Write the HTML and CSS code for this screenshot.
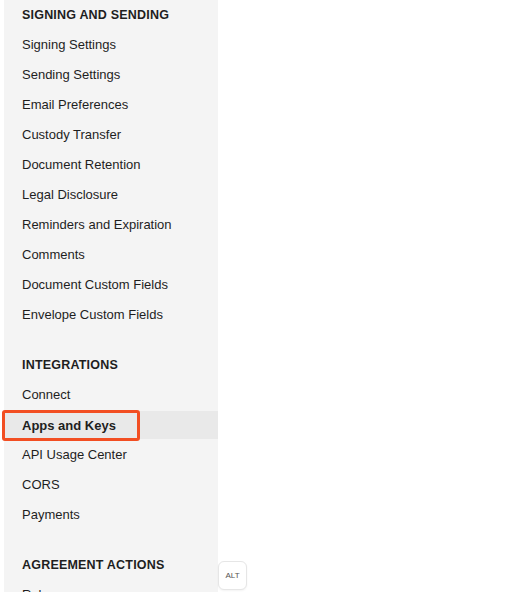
FILE: index.html
```html
<!DOCTYPE html>
<html>
<head>
<meta charset="utf-8">
<link rel="stylesheet" href="styles.css">
</head>
<body>
<nav class="sidebar">
  <section class="group">
    <h2 class="group-title">Signing and Sending</h2>
    <a class="item">Signing Settings</a>
    <a class="item">Sending Settings</a>
    <a class="item">Email Preferences</a>
    <a class="item">Custody Transfer</a>
    <a class="item">Document Retention</a>
    <a class="item">Legal Disclosure</a>
    <a class="item">Reminders and Expiration</a>
    <a class="item">Comments</a>
    <a class="item">Document Custom Fields</a>
    <a class="item">Envelope Custom Fields</a>
  </section>
  <section class="group">
    <h2 class="group-title">Integrations</h2>
    <a class="item">Connect</a>
    <a class="item active">Apps and Keys<span class="callout"></span></a>
    <a class="item">API Usage Center</a>
    <a class="item">CORS</a>
    <a class="item">Payments</a>
  </section>
  <section class="group">
    <h2 class="group-title">Agreement Actions</h2>
    <a class="item">Rules</a>
  </section>
</nav>
<button class="alt-btn">ALT</button>
</body>
</html>
```
FILE: styles.css
```css
html, body {
  margin: 0;
  padding: 0;
  height: 100%;
  overflow: hidden;
  background: #ffffff;
}
body {
  font-family: "Liberation Sans", Arial, sans-serif;
  color: #1e1e1e;
  position: relative;
}
.sidebar {
  margin-left: 4px;
  width: 214px;
  height: 100%;
  background: #f4f4f4;
  display: flex;
  flex-direction: column;
  gap: 20px;
}
.group {
  display: flex;
  flex-direction: column;
}
.group-title {
  margin: 0;
  height: 30px;
  line-height: 30px;
  padding-left: 18px;
  font-size: 12.5px;
  font-weight: bold;
  text-transform: uppercase;
  letter-spacing: 0.2px;
  color: #1e1e1e;
}
.item {
  position: relative;
  display: block;
  box-sizing: border-box;
  height: 30px;
  line-height: 30px;
  padding-left: 18px;
  font-size: 13px;
  color: #1e1e1e;
}
.item.active {
  font-weight: bold;
  padding-top: 2px;
  line-height: 28px;
  background: linear-gradient(#f4f4f4 0 1px, #e9e9e9 1px calc(100% - 1px), #f4f4f4 calc(100% - 1px));
}
.callout {
  position: absolute;
  left: -2px;
  top: 0;
  width: 132px;
  height: 25px;
  border: 3px solid #f24e22;
  border-radius: 3px;
}
.alt-btn {
  position: absolute;
  left: 218px;
  top: 561px;
  width: 29px;
  height: 29px;
  padding: 0;
  background: #ffffff;
  border: 1px solid #e6e6e6;
  border-radius: 6px;
  font-family: "Liberation Sans", Arial, sans-serif;
  font-size: 8px;
  color: #555;
  box-shadow: 0 1px 2px rgba(0,0,0,0.05);
}
```
